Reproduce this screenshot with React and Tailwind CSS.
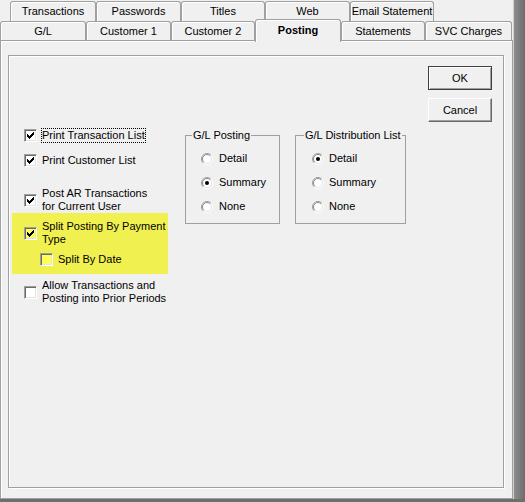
import React from "react";

const backTabs = [
  { label: "Transactions", w: "w-[86px]" },
  { label: "Passwords", w: "w-[85px]" },
  { label: "Titles", w: "w-[84px]" },
  { label: "Web", w: "w-[85px]" },
  { label: "Email Statement", w: "w-[84px]" },
];

const frontTabs = [
  { label: "G/L", w: "w-[86px]" },
  { label: "Customer 1", w: "w-[85px]" },
  { label: "Customer 2", w: "w-[84px]" },
  { label: "Posting", w: "w-[86px]", active: true },
  { label: "Statements", w: "w-[84px]" },
  { label: "SVC Charges", w: "w-[87px]" },
];

function CheckMark() {
  return (
    <svg width="7" height="7" viewBox="0 0 7 7" shapeRendering="crispEdges" className="block">
      <rect x="6" y="0" width="1" height="1" />
      <rect x="5" y="1" width="2" height="1" />
      <rect x="0" y="2" width="1" height="1" />
      <rect x="4" y="2" width="3" height="1" />
      <rect x="0" y="3" width="2" height="1" />
      <rect x="3" y="3" width="3" height="1" />
      <rect x="0" y="4" width="5" height="1" />
      <rect x="1" y="5" width="3" height="1" />
      <rect x="2" y="6" width="1" height="1" />
    </svg>
  );
}

function Checkbox({ checked, tint }) {
  return (
    <span
      className={`flex h-[13px] w-[13px] shrink-0 items-center justify-center border border-[#a0a0a0] border-b-white border-r-white shadow-[inset_1px_1px_0_#696969,inset_-1px_-1px_0_#e3e3e3] ${
        tint ? "bg-[#ffff55]" : "bg-white"
      }`}
    >
      {checked ? <CheckMark /> : null}
    </span>
  );
}

function CheckRow({ checked, tint, focus, children, className = "" }) {
  return (
    <div className={`flex items-center ${className}`}>
      <Checkbox checked={checked} tint={tint} />
      <span
        className={`ml-[4px] border leading-[13px] ${focus ? "border-dotted border-black" : "border-transparent"}`}
      >
        {children}
      </span>
    </div>
  );
}

function Radio({ on }) {
  return (
    <svg width="12" height="12" viewBox="0 0 12 12" className="block shrink-0">
      <circle cx="6" cy="6" r="5" fill="#fff" />
      <path d="M2.1 9.9A5.5 5.5 0 0 1 9.9 2.1" fill="none" stroke="#a0a0a0" />
      <path d="M9.9 2.1A5.5 5.5 0 0 1 2.1 9.9" fill="none" stroke="#fff" />
      <path d="M2.8 9.2A4.5 4.5 0 0 1 9.2 2.8" fill="none" stroke="#8a8a8a" />
      <path d="M9.2 2.8A4.5 4.5 0 0 1 2.8 9.2" fill="none" stroke="#e3e3e3" />
      {on ? <circle cx="6" cy="6" r="2" fill="#000" /> : null}
    </svg>
  );
}

function RadioGroup({ title, options, selected, className, legendGap, pad, labelGap }) {
  return (
    <fieldset className={`border border-[#a0a0a0] ${className}`}>
      <legend className={`${legendGap} px-[1px] leading-[13px]`}>{title}</legend>
      <div className={`flex flex-col gap-[11px] pt-[10px] pb-[10px] ${pad}`}>
        {options.map((opt) => (
          <div key={opt} className="flex h-[13px] items-center">
            <Radio on={opt === selected} />
            <span className={`${labelGap} leading-[13px]`}>{opt}</span>
          </div>
        ))}
      </div>
    </fieldset>
  );
}

export default function App() {
  return (
    <div className="flex h-[502px] w-[525px] flex-col overflow-hidden bg-[#f0f0f0] font-['Liberation_Sans',Arial,sans-serif] text-[11px] text-black">
      <div className="flex h-[499px]">
        <div className="flex w-[513px] flex-col">
          {/* back row of tabs */}
          <div className="flex h-[21px] pl-[10px] pt-[1px]">
            {backTabs.map((t) => (
              <div
                key={t.label}
                className={`${t.w} flex h-[20px] items-center justify-center rounded-t-[3px] border border-b-0 border-[#a0a0a0] shadow-[inset_1px_1px_0_#fff]`}
              >
                {t.label}
              </div>
            ))}
          </div>

          {/* front row of tabs */}
          <div className="flex h-[19px] items-end">
            {frontTabs.map((t) =>
              t.active ? (
                <div
                  key={t.label}
                  className={`${t.w} relative z-10 mb-[-2px] flex h-[23px] items-center justify-center rounded-t-[3px] border border-b-0 border-[#a0a0a0] bg-[#f0f0f0] pb-[2px] font-bold shadow-[inset_1px_1px_0_#fff]`}
                >
                  {t.label}
                </div>
              ) : (
                <div
                  key={t.label}
                  className={`${t.w} flex h-[19px] items-center justify-center rounded-t-[3px] border border-b-0 border-[#a0a0a0] shadow-[inset_1px_1px_0_#fff]`}
                >
                  {t.label}
                </div>
              )
            )}
          </div>

          {/* tab page */}
          <div className="flex h-[459px] flex-col border border-[#a0a0a0] pb-[10px] pl-[7px] pr-[8px] pt-[14px] shadow-[inset_1px_1px_0_#fff]">
            <div className="flex flex-1 items-start border border-[#a0a0a0] shadow-[inset_1px_1px_0_#fff,1px_1px_0_#fff]">
              {/* check options */}
              <div className="ml-[3px] mt-[72px] flex w-[156px] flex-col">
                <CheckRow checked focus className="pl-[12px]">
                  Print Transaction List
                </CheckRow>
                <CheckRow checked className="mt-[10px] pl-[12px]">
                  Print Customer List
                </CheckRow>
                <CheckRow checked className="mt-[18px] pl-[12px]">
                  Post AR Transactions
                  <br />
                  for Current User
                </CheckRow>
                <div className="mt-[-1px] flex flex-col bg-[#f0f050] pb-[7px] pl-[12px] pt-[6px]">
                  <CheckRow checked tint>
                    Split Posting By Payment
                    <br />
                    Type
                  </CheckRow>
                  <CheckRow tint className="ml-[16px] mt-[5px]">
                    Split By Date
                  </CheckRow>
                </div>
                <CheckRow className="mt-[4px] pl-[12px]">
                  Allow Transactions and
                  <br />
                  Posting into Prior Periods
                </CheckRow>
              </div>

              <RadioGroup
                title="G/L Posting"
                options={["Detail", "Summary", "None"]}
                selected="Summary"
                className="ml-[17px] mt-[73px] w-[95px]"
                legendGap="ml-[6px]"
                pad="pl-[15px]"
                labelGap="ml-[6px]"
              />
              <RadioGroup
                title="G/L Distribution List"
                options={["Detail", "Summary", "None"]}
                selected="Detail"
                className="ml-[15px] mt-[73px] w-[111px]"
                legendGap="ml-[8px]"
                pad="pl-[16px]"
                labelGap="ml-[5px]"
              />

              {/* buttons */}
              <div className="ml-[22px] mt-[10px] flex w-[64px] flex-col gap-[8px]">
                <button
                  type="button"
                  className="flex h-[24px] items-center justify-center border border-[#404040] bg-[#f0f0f0] shadow-[inset_1px_1px_0_#fff,inset_-1px_-1px_0_#a0a0a0]"
                >
                  OK
                </button>
                <button
                  type="button"
                  className="flex h-[24px] items-center justify-center border border-white border-b-[#696969] border-r-[#696969] bg-[#f0f0f0] shadow-[inset_-1px_-1px_0_#a0a0a0]"
                >
                  Cancel
                </button>
              </div>
            </div>
          </div>
        </div>
        <div className="w-[12px] border-l border-[#d0d0d0] bg-gradient-to-r from-[#8e8e8e] to-[#6c6c6c]" />
      </div>
      <div className="h-[3px] bg-[#6e6e6e]" />
    </div>
  );
}
